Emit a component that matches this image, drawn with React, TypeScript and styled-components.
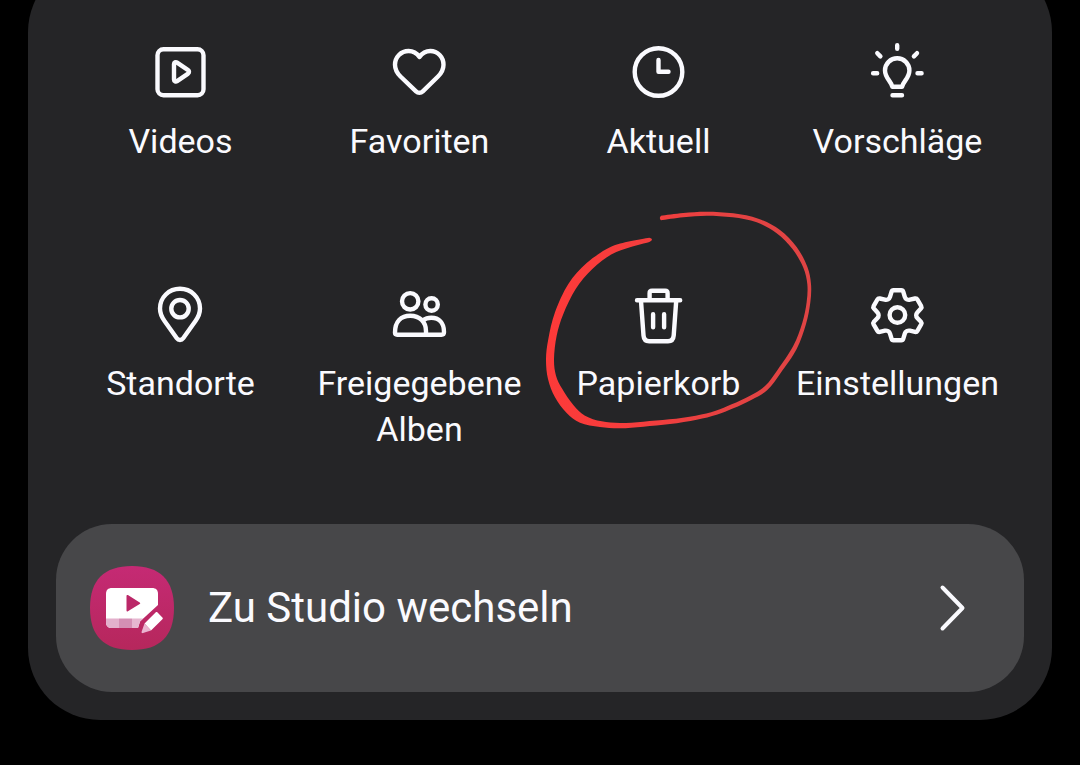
import React from "react";
import styled, { createGlobalStyle } from "styled-components";

const GlobalStyle = createGlobalStyle`
  *, *::before, *::after { box-sizing: border-box; }
  html { background: #000; }
  body {
    margin: 0;
    background: #000;
    color: #fafafe;
    font-family: Roboto, "Liberation Sans", sans-serif;
  }
`;

const Page = styled.main`
  padding: 0 28px 44px;
  overflow: hidden;
`;

const Sheet = styled.section`
  margin-top: -40px;
  padding: 72px 28px 28px;
  border-radius: 72px;
  background: #252527;
`;

const Menu = styled.nav`
  display: grid;
  grid-template-columns: repeat(4, minmax(0, 1fr));
  row-gap: 110px;
  padding: 0 7px 0 5px;
`;

const Item = styled.button`
  position: relative;
  display: flex;
  flex-direction: column;
  align-items: center;
  justify-content: flex-start;
  gap: 14px;
  padding: 8px 0 0;
  border: 0;
  background: none;
  color: inherit;
  font: inherit;
  cursor: pointer;
`;

const Icon = styled.svg.attrs({ viewBox: "1 0 64 64", strokeWidth: 4.4, "aria-hidden": true })`
  display: block;
  width: 64px;
  height: 64px;
  fill: none;
  stroke: currentColor;
  stroke-linecap: round;
  stroke-linejoin: round;
`;

const Label = styled.span`
  max-width: 220px;
  font-size: 34px;
  line-height: 46px;
  text-align: center;
`;

const Marker = styled.svg`
  position: absolute;
  top: -75px;
  left: 50%;
  width: 300px;
  height: 240px;
  margin-left: -129px;
  z-index: 1;
  pointer-events: none;
`;

const StudioButton = styled.button`
  display: flex;
  align-items: center;
  width: 100%;
  height: 168px;
  margin-top: 72px;
  padding: 0 54px 0 34px;
  gap: 34px;
  border: 0;
  border-radius: 56px;
  background: #474749;
  color: inherit;
  font: inherit;
  font-size: 42px;
  line-height: 56px;
  text-align: left;
  cursor: pointer;
`;

const StudioLabel = styled.span`
  flex: 1;
`;

const StudioLogo = styled.svg`
  flex: none;
  width: 84px;
  height: 84px;
`;

const Chevron = styled.svg`
  flex: none;
  width: 32px;
  height: 48px;
  fill: none;
  stroke: currentColor;
  stroke-width: 4;
  stroke-linecap: round;
  stroke-linejoin: round;
`;

type Point = [number, number];

const curve = (p: Point[]) =>
  p
    .slice(0, -1)
    .map((b, i) => {
      const a = p[i - 1] ?? b;
      const c = p[i + 1];
      const d = p[i + 2] ?? c;
      const c1 = [b[0] + (c[0] - a[0]) / 6, b[1] + (c[1] - a[1]) / 6];
      const c2 = [c[0] - (d[0] - b[0]) / 6, c[1] - (d[1] - b[1]) / 6];
      return `C${c1.join(" ")} ${c2.join(" ")} ${c.join(" ")}`;
    })
    .join("");

const outerEdge: Point[] = [
  [358, 116], [300, 127], [240, 145], [170, 192], [115, 255], [75, 340], [55, 420],
  [48, 480], [54, 540], [75, 595], [110, 642], [150, 671], [210, 684], [270, 688],
  [340, 683], [420, 675], [500, 662], [560, 647], [610, 628], [665, 602], [712, 573],
  [752, 522], [800, 450], [828, 375], [841, 310], [843, 255], [832, 203], [800, 144],
  [750, 93], [685, 59], [610, 43], [530, 38], [460, 42], [393, 50],
];

const innerEdge: Point[] = [
  [393, 64], [460, 55], [530, 50], [608, 55], [680, 70], [740, 103], [788, 151],
  [820, 206], [832, 256], [830, 309], [817, 371], [790, 440], [743, 512], [705, 561],
  [660, 590], [605, 616], [557, 635], [497, 650], [418, 661], [340, 668], [270, 672],
  [215, 667], [165, 650], [130, 618], [97, 570], [78, 530], [72, 480], [80, 410],
  [100, 345], [137, 270], [187, 210], [245, 166], [300, 145], [358, 129],
];

const markerPath =
  `M${outerEdge[0].join(" ")}${curve(outerEdge)}` +
  `Q386 57 ${innerEdge[0].join(" ")}${curve(innerEdge)}Q374 120 358 116Z`;

const VideoIcon = () => (
  <Icon>
    <rect x="9.5" y="9.2" width="46" height="46" rx="6" />
    <path d="M26 24v15.400c0 1.700 1.700 2.600 3.100 1.700l11-7.500c1.200-.9 1.200-2.600 0-3.400l-11-7.600c-1.400-1-3.100-.2-3.100 1.400Z" />
  </Icon>
);

const HeartIcon = () => (
  <Icon>
    <path d="M32.500 17C29.800 13.200 25.800 11 21.600 11 14 11 8 17.100 8 24.700c0 4.700 2 8.300 5.500 11.800L29 51.300c2 1.900 4.800 1.900 6.800 0L51 36.500c3.500-3.500 5.500-7.100 5.500-11.800C56.500 17.100 50.700 11 43.300 11c-4.200 0-8.100 2.200-10.800 6Z" />
  </Icon>
);

const ClockIcon = () => (
  <Icon>
    <circle cx="32.500" cy="32" r="23.800" />
    <path d="M32.500 20v11.800H42.500" />
  </Icon>
);

const BulbIcon = () => (
  <Icon>
    <path d="M27.300 46.800c-1.400-6.300-7.300-8.700-7.300-16.300a12.200 12.200 0 0 1 24.400 0c0 7.600-5.900 10-7.300 16.300Z" />
    <path d="M27.500 55.300h9.500M32.200 5.200v3.600M8.100 33.200h4.100M52.500 33.200h4.100M12.300 13.200l3.100 3.200M52 13.200l-3.100 3.200" />
  </Icon>
);

const PinIcon = () => (
  <Icon>
    <path d="M32 6.800c-11.200 0-20 8.600-20 19.800 0 5 1.800 8.800 4.700 12.700l12.100 17c1.600 2.200 4.800 2.200 6.400 0l12.100-17c2.900-3.900 4.700-7.700 4.700-12.700C52 15.400 43.200 6.800 32 6.800Z" />
    <circle cx="32" cy="26.700" r="8.700" />
  </Icon>
);

const PeopleIcon = () => (
  <Icon>
    <circle cx="23.200" cy="19.300" r="8.200" />
    <circle cx="44.600" cy="22.500" r="6.200" />
    <path d="M8 50.500c0-10.700 6-16.800 15.300-16.800s15.700 6.100 15.700 15.500v3.500H10.200c-1.400 0-2.200-.8-2.200-2.200Z" />
    <path d="M36 38.300c2.300-1.700 5-2.500 8.300-2.500 7.700 0 12.700 5.300 12.700 14.200 0 1.900-.8 2.700-2.500 2.700H39" />
  </Icon>
);

const TrashIcon = () => (
  <Icon>
    <path d="M11 18.200h43.200M23.600 17.500v-6.300c0-1.500.9-2.400 2.400-2.400h13.200c1.500 0 2.400.9 2.400 2.400v6.300" />
    <path d="M15 19l2.500 34.500c.3 3.900 2.300 5.700 5.700 5.700h18.800c3.400 0 5.400-1.800 5.700-5.700L50.200 19M27.100 32.300v13M38.100 32.300v13" />
  </Icon>
);

const GearIcon = () => (
  <Icon>
    <path d="M28.500 8.200h7.800c1 0 1.700.6 2 1.600l1.500 5.100c.6 2.100 3 3.400 5.100 2.800l5.100-1.200c1-.2 1.900.1 2.400 1l3.800 6.600c.5.900.4 1.700-.3 2.500L52.300 30.400c-1.500 1.600-1.500 4 0 5.600l3.600 3.800c.7.800.8 1.600.3 2.500l-3.800 6.600c-.5.900-1.400 1.200-2.400 1l-5.100-1.200c-2.100-.5-4.500.8-5.100 2.900l-1.500 5c-.3 1-1 1.600-2 1.600h-7.800c-1 0-1.700-.6-2-1.600l-1.500-5c-.6-2.100-3-3.400-5.100-2.900l-5.100 1.200c-1 .2-1.900-.1-2.400-1l-3.800-6.600c-.5-.9-.4-1.700.3-2.500l3.600-3.800c1.500-1.600 1.500-4 0-5.600l-3.600-3.800c-.7-.8-.8-1.600-.3-2.500l3.800-6.600c.5-.9 1.400-1.200 2.400-1l5.100 1.200c2.100.6 4.500-.7 5.100-2.800l1.500-5.100c.3-1 1-1.600 2-1.600Z" />
    <circle cx="32.400" cy="33" r="7.800" />
  </Icon>
);

const items = [
  { label: "Videos", Glyph: VideoIcon },
  { label: "Favoriten", Glyph: HeartIcon },
  { label: "Aktuell", Glyph: ClockIcon },
  { label: "Vorschläge", Glyph: BulbIcon },
  { label: "Standorte", Glyph: PinIcon },
  { label: "Freigegebene Alben", Glyph: PeopleIcon },
  { label: "Papierkorb", Glyph: TrashIcon, marked: true },
  { label: "Einstellungen", Glyph: GearIcon },
];

export default function App() {
  return (
    <>
      <GlobalStyle />
      <Page>
        <Sheet>
          <Menu>
            {items.map(({ label, Glyph, marked }) => (
              <Item key={label} type="button">
                <Glyph />
                <Label>{label}</Label>
                {marked && (
                  <Marker viewBox="0 0 900 720" aria-hidden="true">
                    <defs>
                      <linearGradient id="ink" x1="0" x2="1" y1="0" y2="0">
                        <stop offset="0" stopColor="#fd3a39" />
                        <stop offset="0.35" stopColor="#f53d3d" />
                        <stop offset="0.7" stopColor="#e44242" />
                        <stop offset="1" stopColor="#e04444" />
                      </linearGradient>
                    </defs>
                    <path d={markerPath} fill="url(#ink)" />
                  </Marker>
                )}
              </Item>
            ))}
          </Menu>
          <StudioButton type="button">
            <StudioLogo viewBox="0 0 84 84" aria-hidden="true">
              <defs>
                <linearGradient id="studio" x1="0" x2="0" y1="0" y2="1">
                  <stop offset="0" stopColor="#c52a74" />
                  <stop offset="1" stopColor="#b6275c" />
                </linearGradient>
              </defs>
              <path
                d="M42 0C70 0 84 14 84 42S70 84 42 84 0 70 0 42 14 0 42 0Z"
                fill="url(#studio)"
              />
              <path d="M22 22h40c4 0 6 2 6 6v11L50 55.500 48 62H22c-4 0-6-2-6-6V28c0-4 2-6 6-6Z" fill="#fff" />
              <path d="M16 52.500h13v9.500h-7c-4 0-6-2-6-6Z" fill="#e3b0cc" />
              <path d="M29 52.500h13v9.500H29Z" fill="#d48fb4" />
              <path d="M42 52.500h11L50 55.500 48 62h-6Z" fill="#e6b6d0" />
              <path d="M36.500 29.800v14.800c0 .9.700 1.200 1.400.7l11.800-7.300c.7-.5.700-1.100 0-1.600l-11.800-7.300c-.7-.5-1.400-.1-1.400.7Z" fill="#bb2768" />
              <path d="M67.300 46.300 72.400 51.500c.6.600.6 1.100 0 1.700L61 64.500l-6.500-7L65.800 46.300c.5-.5 1-.5 1.500 0Z" fill="#fff" />
              <path d="M54.500 57.500 61 64.500l-8 2.600c-1 .3-1.700-.3-1.400-1.300Z" fill="#eab4d0" />
            </StudioLogo>
            <StudioLabel>Zu Studio wechseln</StudioLabel>
            <Chevron viewBox="0 0 32 48" aria-hidden="true">
              <path d="M4.500 3.500 24.500 24 4.500 44.500" />
            </Chevron>
          </StudioButton>
        </Sheet>
      </Page>
    </>
  );
}
